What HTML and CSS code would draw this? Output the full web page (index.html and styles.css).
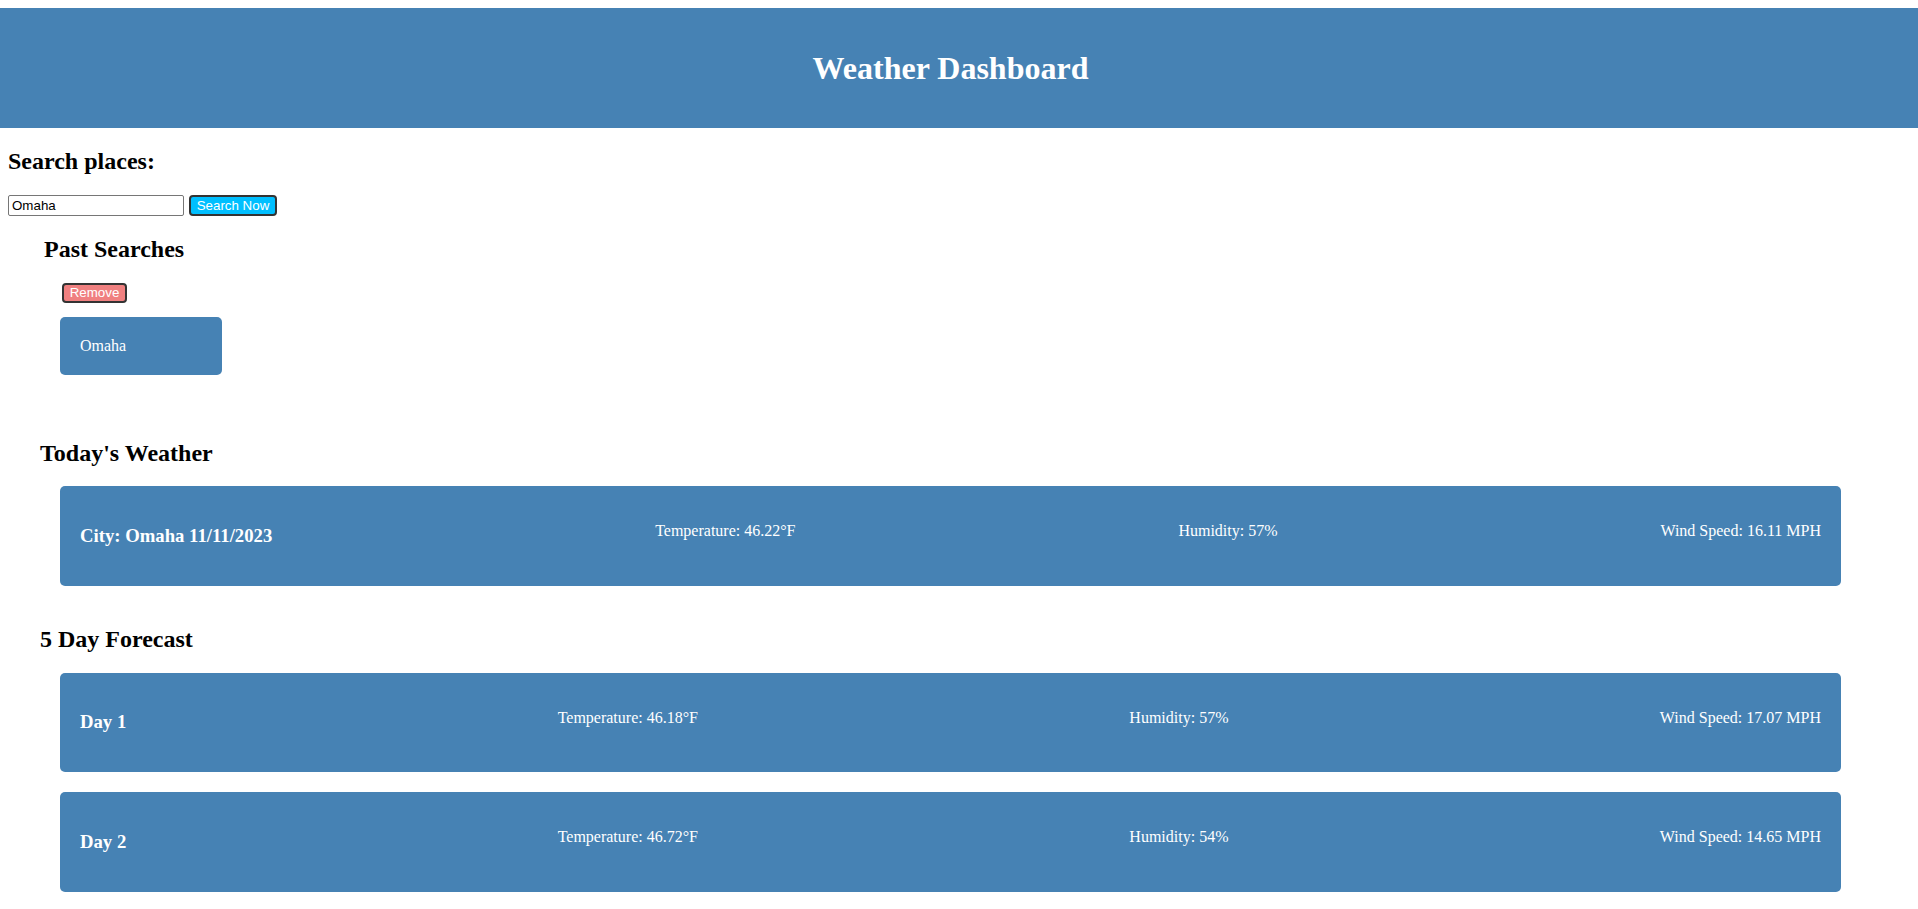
FILE: index.html
```html
<!DOCTYPE html>
<html lang="en">
<head>
<meta charset="utf-8">
<title>Weather Dashboard</title>
<link rel="stylesheet" href="styles.css">
</head>
<body>
<header class="top-bar">
  <h1 class="title">Weather Dashboard</h1>
</header>
<main class="page">
  <h2 class="heading">Search places:</h2>
  <div class="search-row">
    <input class="search-input" type="text" value="Omaha">
    <button class="btn btn-search">Search Now</button>
  </div>
  <section class="past">
    <h2 class="heading">Past Searches</h2>
    <button class="btn btn-remove">Remove</button>
    <div class="past-item">Omaha</div>
  </section>
  <section class="today">
    <h2 class="heading">Today's Weather</h2>
    <div class="card">
      <h3 class="card-title">City: Omaha 11/11/2023</h3>
      <p class="card-stat">Temperature: 46.22°F</p>
      <p class="card-stat">Humidity: 57%</p>
      <p class="card-stat">Wind Speed: 16.11 MPH</p>
    </div>
  </section>
  <section class="forecast">
    <h2 class="heading">5 Day Forecast</h2>
    <div class="forecast-list">
      <div class="card">
        <h3 class="card-title">Day 1</h3>
        <p class="card-stat">Temperature: 46.18°F</p>
        <p class="card-stat">Humidity: 57%</p>
        <p class="card-stat">Wind Speed: 17.07 MPH</p>
      </div>
      <div class="card">
        <h3 class="card-title">Day 2</h3>
        <p class="card-stat">Temperature: 46.72°F</p>
        <p class="card-stat">Humidity: 54%</p>
        <p class="card-stat">Wind Speed: 14.65 MPH</p>
      </div>
    </div>
  </section>
</main>
</body>
</html>
```
FILE: styles.css
```css
html, body {
  margin: 0;
  padding: 0;
}

body {
  font-family: "Liberation Serif", "Times New Roman", serif;
  font-size: 16px;
  color: #000;
  background: #fff;
}

.top-bar {
  margin-top: 8px;
  height: 120px;
  padding-right: 17px;
  background: #4682b4;
  display: flex;
  align-items: center;
  justify-content: center;
}

.title {
  margin: 0;
  font-size: 32px;
  font-weight: bold;
  color: #fff;
}

.page {
  padding: 0 8px;
}

.heading {
  font-size: 24px;
  font-weight: bold;
  margin: 19.92px 0;
}

.search-row {
  display: flex;
  align-items: center;
  gap: 5px;
}

.search-input {
  box-sizing: border-box;
  width: 176px;
  height: 21px;
  margin: 0;
  padding: 1px 3px;
  border: 1px solid #767676;
  border-radius: 2px;
  font-family: "Liberation Sans", Arial, sans-serif;
  font-size: 13.33px;
}

.btn {
  box-sizing: border-box;
  margin: 0;
  padding: 0;
  border: 2px solid #333;
  border-radius: 4px;
  color: #fff;
  font-family: "Liberation Sans", Arial, sans-serif;
  font-size: 13.33px;
  white-space: nowrap;
  text-align: center;
}

.btn-search {
  width: 88px;
  height: 21px;
  background: #00bfff;
}

.past {
  padding-left: 36px;
  display: flex;
  flex-direction: column;
  align-items: flex-start;
}

.btn-remove {
  width: 65px;
  height: 20px;
  margin-left: 18px;
  background: #f08080;
}

.past-item {
  box-sizing: border-box;
  width: 162px;
  margin: 14px 0 0 16px;
  padding: 20px;
  background: #4682b4;
  color: #fff;
  border-radius: 5px;
  line-height: 18px;
}

.today {
  padding: 45px 0 0 32px;
}

.forecast {
  padding: 20px 0 0 32px;
}

.forecast-list {
  display: flex;
  flex-direction: column;
  gap: 20px;
}

.card {
  box-sizing: border-box;
  width: 1781px;
  margin-left: 20px;
  padding: 20px;
  background: #4682b4;
  color: #fff;
  border-radius: 5px;
  display: flex;
  justify-content: space-between;
}

.card-title {
  margin: 18.72px 0;
  font-size: 18.72px;
  font-weight: bold;
}

.card-stat {
  margin: 16px 0;
}
```
